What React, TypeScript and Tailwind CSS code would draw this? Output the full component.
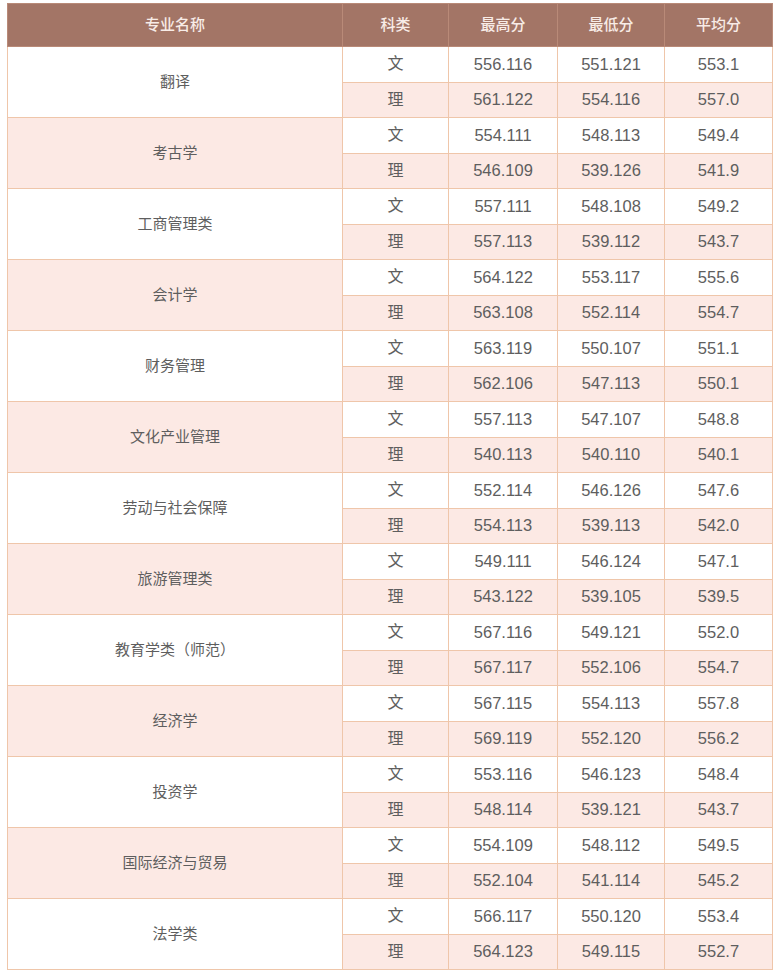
import { Fragment } from "react";

type Row = { name: string; wen: [string, string, string]; li: [string, string, string] };

const rows: Row[] = [
  { name: "翻译", wen: ["556.116", "551.121", "553.1"], li: ["561.122", "554.116", "557.0"] },
  { name: "考古学", wen: ["554.111", "548.113", "549.4"], li: ["546.109", "539.126", "541.9"] },
  { name: "工商管理类", wen: ["557.111", "548.108", "549.2"], li: ["557.113", "539.112", "543.7"] },
  { name: "会计学", wen: ["564.122", "553.117", "555.6"], li: ["563.108", "552.114", "554.7"] },
  { name: "财务管理", wen: ["563.119", "550.107", "551.1"], li: ["562.106", "547.113", "550.1"] },
  { name: "文化产业管理", wen: ["557.113", "547.107", "548.8"], li: ["540.113", "540.110", "540.1"] },
  { name: "劳动与社会保障", wen: ["552.114", "546.126", "547.6"], li: ["554.113", "539.113", "542.0"] },
  { name: "旅游管理类", wen: ["549.111", "546.124", "547.1"], li: ["543.122", "539.105", "539.5"] },
  { name: "教育学类（师范）", wen: ["567.116", "549.121", "552.0"], li: ["567.117", "552.106", "554.7"] },
  { name: "经济学", wen: ["567.115", "554.113", "557.8"], li: ["569.119", "552.120", "556.2"] },
  { name: "投资学", wen: ["553.116", "546.123", "548.4"], li: ["548.114", "539.121", "543.7"] },
  { name: "国际经济与贸易", wen: ["554.109", "548.112", "549.5"], li: ["552.104", "541.114", "545.2"] },
  { name: "法学类", wen: ["566.117", "550.120", "553.4"], li: ["564.123", "549.115", "552.7"] },
];

const font = { fontFamily: '"Liberation Sans", "Noto Sans CJK SC", sans-serif' };

const cell = "border border-[#efc6aa] text-center align-middle";

export default function App() {
  return (
    <div className="min-h-[978px] bg-white pl-[7px] pt-[3px]" style={font}>
      <table className="w-[765px] table-fixed border-collapse border border-[#efc6aa] text-[#5e5e5e]">
        <colgroup>
          <col className="w-[335px]" />
          <col className="w-[106px]" />
          <col className="w-[109px]" />
          <col className="w-[107px]" />
          <col className="w-[108px]" />
        </colgroup>
        <thead>
          <tr className="h-[43px] bg-[#a37566] text-[15px] text-[#f8ece7]">
            {["专业名称", "科类", "最高分", "最低分", "平均分"].map((h) => (
              <th key={h} className="border border-[#b98a78] text-center font-medium">
                {h}
              </th>
            ))}
          </tr>
        </thead>
        <tbody>
          {rows.map((r, i) => (
            <Fragment key={r.name}>
              <tr className="h-[35.5px] bg-white">
                <td rowSpan={2} className={`${cell} text-[15px] ${i % 2 === 1 ? "bg-[#fce9e4]" : "bg-white"}`}>
                  {r.name}
                </td>
                <td className={`${cell} text-[16px]`}>文</td>
                {r.wen.map((v, j) => (
                  <td key={j} className={`${cell} text-[16.5px]`}>
                    {v}
                  </td>
                ))}
              </tr>
              <tr className="h-[35.5px] bg-[#fce9e4]">
                <td className={`${cell} text-[16px]`}>理</td>
                {r.li.map((v, j) => (
                  <td key={j} className={`${cell} text-[16.5px]`}>
                    {v}
                  </td>
                ))}
              </tr>
            </Fragment>
          ))}
        </tbody>
      </table>
    </div>
  );
}
